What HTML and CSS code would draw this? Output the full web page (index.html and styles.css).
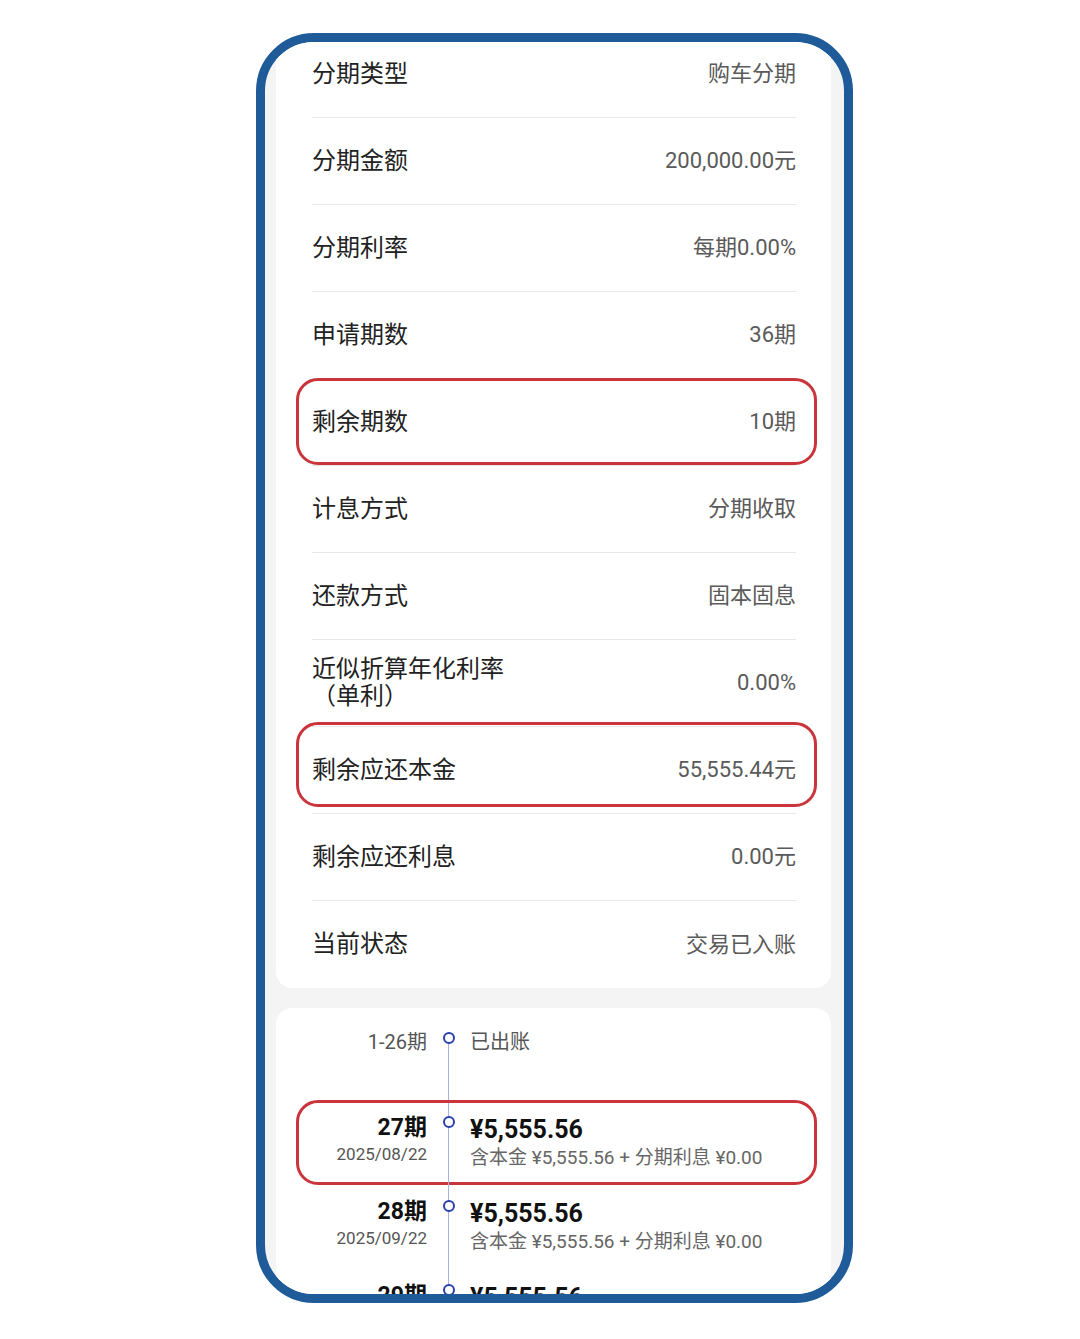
FILE: index.html
```html
<!DOCTYPE html>
<html lang="zh-CN">
<head>
<meta charset="utf-8">
<title>分期详情</title>
<link rel="stylesheet" href="styles.css">
</head>
<body>
<div class="frame">
  <div class="scroll">
    <section class="card info">
      <div class="row"><span class="label">分期类型</span><span class="value">购车分期</span></div>
      <div class="row"><span class="label">分期金额</span><span class="value">200,000.00元</span></div>
      <div class="row"><span class="label">分期利率</span><span class="value">每期0.00%</span></div>
      <div class="row"><span class="label">申请期数</span><span class="value">36期</span></div>
      <div class="row"><span class="label">剩余期数</span><span class="value">10期</span><span class="mark mark-a"></span></div>
      <div class="row"><span class="label">计息方式</span><span class="value">分期收取</span></div>
      <div class="row"><span class="label">还款方式</span><span class="value">固本固息</span></div>
      <div class="row"><span class="label label-wrap">近似折算年化利率（单利）</span><span class="value">0.00%</span></div>
      <div class="row"><span class="label">剩余应还本金</span><span class="value">55,555.44元</span><span class="mark mark-b"></span></div>
      <div class="row"><span class="label">剩余应还利息</span><span class="value">0.00元</span></div>
      <div class="row"><span class="label">当前状态</span><span class="value">交易已入账</span></div>
    </section>
    <section class="card timeline">
      <div class="item item-first">
        <div class="left"><div class="range">1-26期</div></div>
        <div class="axis"><span class="dot"></span></div>
        <div class="right"><div class="status">已出账</div></div>
      </div>
      <div class="item">
        <div class="left"><div class="period">27期</div><div class="date">2025/08/22</div></div>
        <div class="axis"><span class="dot"></span></div>
        <div class="right"><div class="amount">¥5,555.56</div><div class="detail">含本金 ¥5,555.56 + 分期利息 ¥0.00</div></div>
        <span class="mark mark-c"></span>
      </div>
      <div class="item">
        <div class="left"><div class="period">28期</div><div class="date">2025/09/22</div></div>
        <div class="axis"><span class="dot"></span></div>
        <div class="right"><div class="amount">¥5,555.56</div><div class="detail">含本金 ¥5,555.56 + 分期利息 ¥0.00</div></div>
      </div>
      <div class="item">
        <div class="left"><div class="period">29期</div><div class="date">2025/10/22</div></div>
        <div class="axis"><span class="dot"></span></div>
        <div class="right"><div class="amount">¥5,555.56</div><div class="detail">含本金 ¥5,555.56 + 分期利息 ¥0.00</div></div>
      </div>
    </section>
  </div>
</div>
</body>
</html>
```
FILE: styles.css
```css
html, body {
  margin: 0;
  padding: 0;
  background: #ffffff;
}

body {
  font-family: Roboto, "Noto Sans CJK SC", "Noto Sans", sans-serif;
  color: #222;
}

.frame {
  box-sizing: border-box;
  width: 597px;
  height: 1270px;
  margin: 33px 0 0 256px;
  border: 9px solid #1f5a99;
  border-radius: 58px;
  background: #f4f4f4;
  overflow: hidden;
}

.scroll {
  padding: 0 13px 0 11px;
  margin-top: -11px;
}

.card {
  background: #ffffff;
  border-radius: 16px;
}

.info {
  padding: 0 35px 0 36px;
}

.row {
  position: relative;
  height: 86px;
  border-bottom: 1px solid #e8e8e8;
  display: flex;
  align-items: center;
  justify-content: space-between;
}

.row:last-child {
  border-bottom: none;
  height: 87px;
}

.label {
  font-size: 24px;
  color: #222;
  line-height: 27px;
}

.label-wrap {
  max-width: 200px;
}

.value {
  font-size: 22px;
  line-height: 26px;
  padding-bottom: 0;
  color: #5a5a5a;
}

.mark {
  position: absolute;
  border: 3px solid #c9353b;
  border-radius: 22px;
  pointer-events: none;
}

.mark-a {
  left: -16px;
  right: -21px;
  top: -1px;
  bottom: 0;
}

.mark-b {
  left: -16px;
  right: -21px;
  top: -5px;
  bottom: 6px;
}

.mark-c {
  left: 20px;
  right: 14px;
  top: 8px;
  bottom: -9px;
}

.timeline {
  margin-top: 20px;
  min-height: 420px;
}

.item {
  position: relative;
  box-sizing: border-box;
  height: 84px;
  padding-top: 22px;
  display: grid;
  grid-template-columns: 151px 43px 1fr;
}

.left {
  text-align: right;
}

.range,
.status {
  font-size: 20px;
  line-height: 24px;
  color: #555;
}

.period {
  font-size: 23px;
  font-weight: 700;
  line-height: 28px;
  color: #111;
}

.date {
  font-size: 17px;
  line-height: 24px;
  color: #555;
}

.amount {
  font-size: 25px;
  font-weight: 700;
  line-height: 32px;
  color: #111;
}

.detail {
  font-size: 19px;
  line-height: 24px;
  color: #666;
}

.axis {
  position: relative;
  margin-top: -22px;
  height: 84px;
}

.axis::before {
  content: "";
  position: absolute;
  left: 21px;
  width: 1px;
  top: 0;
  bottom: 0;
  background: #a7b3dc;
}

.item-first .axis::before {
  top: 30px;
}

.dot {
  position: absolute;
  box-sizing: border-box;
  left: 16px;
  top: 24px;
  width: 12px;
  height: 12px;
  border: 2.5px solid #2a3fae;
  border-radius: 50%;
  background: #ffffff;
}

.right {
  padding-left: 0;
}
```
